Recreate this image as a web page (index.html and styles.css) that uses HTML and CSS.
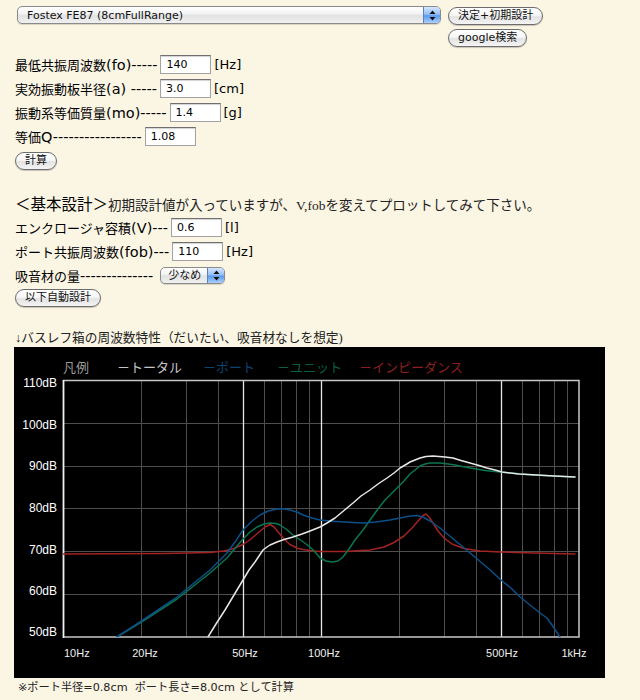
FILE: index.html
```html
<!DOCTYPE html>
<html lang="ja">
<head>
<meta charset="utf-8">
<title>バスレフ箱設計</title>
<link rel="stylesheet" href="styles.css">
</head>
<body>
<div class="page">
  <div class="top">
    <div class="sel sel-main">
      <select><option>Fostex FE87 (8cmFullRange)</option></select>
      <span class="sel-arrow"><svg width="7" height="11" viewBox="0 0 7 11"><path d="M3.5 0.5 L6.5 4 L0.5 4 Z M0.5 7 L6.5 7 L3.5 10.5 Z" fill="#111"/></svg></span>
    </div>
    <div class="btns">
      <button class="btn">決定+初期設計</button>
      <button class="btn">google検索</button>
    </div>
  </div>

  <div class="form1">
    <div class="row"><span class="lbl">最低共振周波数<span class="lat">(fo)-----</span></span><input class="num" type="text" value="140"><span class="unit">[Hz]</span></div>
    <div class="row"><span class="lbl">実効振動板半径<span class="lat">(a) -----</span></span><input class="num" type="text" value="3.0"><span class="unit">[cm]</span></div>
    <div class="row"><span class="lbl">振動系等価質量<span class="lat">(mo)-----</span></span><input class="num" type="text" value="1.4"><span class="unit">[g]</span></div>
    <div class="row"><span class="lbl">等価<span class="lat">Q-----------------</span></span><input class="num" type="text" value="1.08"></div>
    <button class="btn btn-calc">計算</button>
  </div>

  <div class="head"><span class="head-big">＜基本設計＞</span><span class="head-note">初期設計値が入っていますが、V,fobを変えてプロットしてみて下さい。</span></div>

  <div class="form2">
    <div class="row"><span class="lbl">エンクロージャ容積<span class="lat">(V)---</span></span><input class="num" type="text" value="0.6"><span class="unit">[l]</span></div>
    <div class="row"><span class="lbl">ポート共振周波数<span class="lat">(fob)---</span></span><input class="num" type="text" value="110"><span class="unit">[Hz]</span></div>
    <div class="row"><span class="lbl">吸音材の量<span class="lat">--------------</span></span>
      <div class="sel sel-small">
        <select><option>少なめ</option></select>
        <span class="sel-arrow"><svg width="7" height="11" viewBox="0 0 7 11"><path d="M3.5 0.5 L6.5 4 L0.5 4 Z M0.5 7 L6.5 7 L3.5 10.5 Z" fill="#111"/></svg></span>
      </div>
    </div>
    <button class="btn btn-auto">以下自動設計</button>
  </div>

  <div class="caption">↓バスレフ箱の周波数特性（だいたい、吸音材なしを想定)</div>

  <div class="chart">
    <svg width="591" height="331" viewBox="0 0 591 331">
      <defs>
        <clipPath id="plot"><rect x="49" y="33" width="516" height="257"/></clipPath>
      </defs>
      <rect width="591" height="331" fill="#000"/>
      <g class="legend">
        <text x="49" y="25" fill="#9c9c9c">凡例</text>
        <text x="103" y="25" fill="#c4c4c4">－トータル</text>
        <text x="189" y="25" fill="#0c4472">－ポート</text>
        <text x="263" y="25" fill="#0c5e44">－ユニット</text>
        <text x="345" y="25" fill="#8c2020">－インピーダンス</text>
      </g>
      <g stroke="#4e4e4e" stroke-width="1">
        <line x1="49" y1="76.5" x2="565" y2="76.5"/>
        <line x1="49" y1="119.5" x2="565" y2="119.5"/>
        <line x1="49" y1="161.5" x2="565" y2="161.5"/>
        <line x1="49" y1="204.5" x2="565" y2="204.5"/>
        <line x1="49" y1="247.5" x2="565" y2="247.5"/>
        <line x1="127.5" y1="33" x2="127.5" y2="290"/>
        <line x1="172.5" y1="33" x2="172.5" y2="290"/>
        <line x1="204.5" y1="33" x2="204.5" y2="290"/>
        <line x1="250.5" y1="33" x2="250.5" y2="290"/>
        <line x1="267.5" y1="33" x2="267.5" y2="290"/>
        <line x1="282.5" y1="33" x2="282.5" y2="290"/>
        <line x1="295.5" y1="33" x2="295.5" y2="290"/>
        <line x1="385.5" y1="33" x2="385.5" y2="290"/>
        <line x1="430.5" y1="33" x2="430.5" y2="290"/>
        <line x1="462.5" y1="33" x2="462.5" y2="290"/>
        <line x1="508.5" y1="33" x2="508.5" y2="290"/>
        <line x1="525.5" y1="33" x2="525.5" y2="290"/>
        <line x1="540.5" y1="33" x2="540.5" y2="290"/>
        <line x1="553.5" y1="33" x2="553.5" y2="290"/>
      </g>
      <g stroke="#e6e6e6" stroke-width="1.3">
        <line x1="229.5" y1="33" x2="229.5" y2="290"/>
        <line x1="307.5" y1="33" x2="307.5" y2="290"/>
        <line x1="487.5" y1="33" x2="487.5" y2="290"/>
      </g>
      <rect x="49.5" y="33.5" width="515.5" height="256.5" fill="none" stroke="#c8c8c8" stroke-width="1.5"/>
      <line x1="49.5" y1="33" x2="49.5" y2="291" stroke="#f0f0f0" stroke-width="1.5"/>

      <g class="ylab" text-anchor="end">
        <text x="43" y="40">110dB</text>
        <text x="43" y="82">100dB</text>
        <text x="43" y="123">90dB</text>
        <text x="43" y="165">80dB</text>
        <text x="43" y="207">70dB</text>
        <text x="43" y="248">60dB</text>
        <text x="43" y="289">50dB</text>
      </g>
      <g class="xlab" text-anchor="middle">
        <text x="50" y="310" text-anchor="start">10Hz</text>
        <text x="131" y="310">20Hz</text>
        <text x="231" y="310">50Hz</text>
        <text x="310" y="310">100Hz</text>
        <text x="488" y="310">500Hz</text>
        <text x="560" y="310">1kHz</text>
      </g>

      <g clip-path="url(#plot)" fill="none" stroke-width="1.5" stroke-linejoin="round" stroke-linecap="round">
        <polyline stroke="#a32222" points="49,207 150,206.5 196,205.5 210,204 220,201.5 229,197.5 237,192 245,185 251,180 256,177.5 260,180 265,186 270,192 276,197.5 284,201.5 295,203.5 306,204.5 330,204.5 356,203 370,200 380,195.5 390,189 398,181 405,173 409,168.5 412,167 415,170 419,176 424,184 430,191 438,197 450,201.5 466,204 487,205 520,206 561,207"/>
        <polyline stroke="#0a7550" points="98,294 103,290 129,274 163,252 196,226 213,211 229,192 236,185 243,180 250,177 256,176 262,176.5 266,178 272,182 279,188 288,194 296,200 302,206 306,211 312,214 318,215 324,214 329,210 335,202 341,193 349,183 356,173 364,162 371,153 377,147 383,141 390,134 396,127 401,123 406,119 411,117 416,116 426,116 434,117 441,118 456,121 471,123.5 486,125 502,126.5 519,128 540,129 561,130"/>
        <polyline stroke="#0b4f88" points="98,294 103,290 129,273 163,250 196,223 213,206 221,195 229,183 237,175 246,168 254,164 263,162 270,162 276,163 283,165 289,168 298,171 306,173 316,174 330,175 349,176 362,175 376,173 386,171 396,169 403,168.5 409,170 416,174 426,181 437,190 449,200 462,211 475,222 487,233 497,241 506,250 516,258 526,266 533,271 538,278 542,284 546,290 548,294"/>
        <polyline stroke="#e8e8e8" points="191,295 194,290 202,277 211,263 220,248 229,233 235,223 241,215 245,209 249,203 253,200 256,198 263,195 270,192.5 279,190 288,187 296,184 301,182 306,180 313,176 321,171 330,163.5 339,156 347,149 356,143 364,137 373,131 380,126 386,121 392,117.5 396,115 401,113 406,111 412,109.5 419,109 425,109.5 431,110 439,111 447,113.5 456,116 465,118.5 473,121 481,123 488,125 505,127 523,128 540,129 561,130"/>
      </g>
    </svg>
  </div>

  <div class="note">※ポート半径=0.8cm&nbsp; ポート長さ=8.0cm として計算</div>
</div>
</body>
</html>
```

FILE: styles.css
```css
* { box-sizing: border-box; }

html, body {
  margin: 0;
  padding: 0;
}

body {
  background: #fbf5e4;
  color: #000;
  font-family: "DejaVu Sans", "Noto Sans CJK JP", sans-serif;
  font-size: 13px;
}

.page {
  width: 640px;
  height: 700px;
  overflow: hidden;
  padding: 6px 0 0 15px;
}

/* ---------- top bar ---------- */
.top {
  display: flex;
  align-items: flex-start;
  gap: 7px;
}

.sel {
  display: flex;
  align-items: stretch;
  height: 18px;
  border: 1px solid #8a8a8a;
  border-radius: 5px;
  overflow: hidden;
  background: linear-gradient(#ffffff 0%, #f4f4f4 40%, #e2e2e2 55%, #f0f0f0 100%);
  box-shadow: 0 1px 1px rgba(0, 0, 0, 0.15);
}

.sel-main {
  width: 424px;
  margin-left: 2px;
}

.sel select {
  -webkit-appearance: none;
  appearance: none;
  flex: 1;
  min-width: 0;
  height: 100%;
  border: 0;
  outline: none;
  background: transparent;
  color: #111;
  font-family: "DejaVu Sans", "Noto Sans CJK JP", sans-serif;
  font-size: 11px;
  padding: 0 0 0 9px;
}

.sel-arrow {
  width: 17px;
  flex: none;
  display: flex;
  align-items: center;
  justify-content: center;
  border-left: 1px solid #5d82bb;
  background: linear-gradient(#d6e7ff 0%, #94bff7 45%, #5d9bec 55%, #a9d0ff 100%);
}

.btns {
  display: flex;
  flex-direction: column;
  align-items: flex-start;
  gap: 4px;
  margin-top: 1px;
}

.btn {
  height: 18px;
  padding: 0 9px;
  border: 1px solid #6c6c6c;
  border-radius: 9px;
  background: linear-gradient(#ffffff 0%, #f6f6f6 45%, #e3e3e3 55%, #f4f4f4 100%);
  box-shadow: 0 1px 1px rgba(0, 0, 0, 0.2);
  color: #111;
  font-family: "DejaVu Sans", "Noto Sans CJK JP", sans-serif;
  font-size: 11px;
  line-height: 16px;
  white-space: nowrap;
}

/* ---------- form rows ---------- */
.form1 {
  margin-top: 5px;
}

.row {
  display: flex;
  align-items: center;
  height: 24px;
  white-space: nowrap;
}

.lbl {
  margin-right: 3px;
  font-family: "Noto Sans CJK JP", sans-serif;
  font-size: 13px;
}

.lat {
  font-family: "DejaVu Sans", sans-serif;
  font-size: 14.5px;
}

.num {
  width: 51px;
  height: 19px;
  padding: 0 5px;
  border: 1px solid #a3a3a3;
  border-top-color: #707070;
  box-shadow: inset 0 1px 1px rgba(0, 0, 0, 0.18);
  background: #fff;
  color: #000;
  font-family: "DejaVu Sans", sans-serif;
  font-size: 11px;
  outline: none;
}

.unit {
  margin-left: 3px;
}

.btn-calc {
  display: block;
  margin-top: 4px;
}

/* ---------- basic design ---------- */
.head {
  margin-top: 23px;
  height: 20px;
  line-height: 20px;
  white-space: nowrap;
}

.head-big {
  font-family: "Noto Sans CJK JP", sans-serif;
  font-size: 15.5px;
}

.head-note {
  font-family: "Liberation Serif", "Noto Sans CJK JP", serif;
  font-size: 13.5px;
  color: #222;
}

.form2 {
  margin-top: 2px;
}

.sel-small {
  width: 65px;
  height: 17px;
  margin-left: 4px;
}

.sel-small select {
  padding-left: 7px;
}

.btn-auto {
  display: block;
  margin-top: 2px;
}

.caption {
  margin-top: 22px;
  height: 18px;
  line-height: 18px;
  font-family: "Liberation Serif", "Noto Sans CJK JP", serif;
  font-size: 12.7px;
  color: #222;
  white-space: nowrap;
}

/* ---------- chart ---------- */
.chart {
  margin-left: -1px;
  width: 591px;
  height: 331px;
}

.chart svg {
  display: block;
}

.legend text {
  font-family: "Noto Sans CJK JP", sans-serif;
  font-size: 13px;
}

.ylab text {
  font-family: "Liberation Sans", sans-serif;
  font-size: 12px;
  fill: #fff;
}

.xlab text {
  font-family: "Liberation Sans", sans-serif;
  font-size: 11px;
  fill: #f0f0f0;
}

.note {
  margin-top: 2px;
  padding-left: 3px;
  height: 16px;
  line-height: 16px;
  font-family: "DejaVu Sans", "Noto Sans CJK JP", sans-serif;
  font-size: 11.2px;
  color: #222;
  white-space: nowrap;
}
```
